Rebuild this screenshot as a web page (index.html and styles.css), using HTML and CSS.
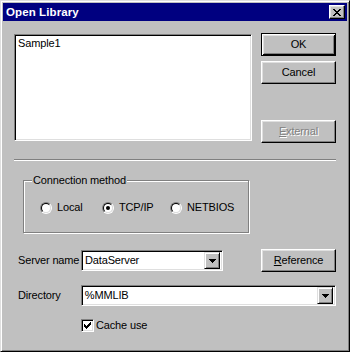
FILE: index.html
```html
<!DOCTYPE html>
<html>
<head>
<meta charset="utf-8">
<link rel="stylesheet" href="styles.css">
</head>
<body>
<div class="window">
  <div class="titlebar">
    <span class="title">Open Library</span>
    <span class="close">
      <svg width="8" height="7" viewBox="0 0 8 7" shape-rendering="crispEdges">
        <path d="M0 0h2v1h-2zM6 0h2v1h-2zM1 1h2v1h-2zM5 1h2v1h-2zM2 2h4v1h-4zM3 3h2v1h-2zM2 4h4v1h-4zM1 5h2v1h-2zM5 5h2v1h-2zM0 6h2v1h-2zM6 6h2v1h-2z" fill="#000"/>
      </svg>
    </span>
  </div>
  <div class="client">
    <div class="top">
      <div class="listbox"><div class="item">Sample1</div></div>
      <div class="btncol">
        <button class="btn default">OK</button>
        <button class="btn">Cancel</button>
        <button class="btn disabled"><u>E</u>xternal</button>
      </div>
    </div>
    <div class="sep"></div>
    <fieldset class="group">
      <legend>Connection method</legend>
      <div class="radios">
        <div class="radio"><span class="circle"><span class="inner"></span></span><span>Local</span></div>
        <div class="radio"><span class="circle"><span class="inner"><span class="dot"></span></span></span><span>TCP/IP</span></div>
        <div class="radio"><span class="circle"><span class="inner"></span></span><span>NETBIOS</span></div>
      </div>
    </fieldset>
    <div class="row server">
      <span class="lbl">Server name</span>
      <div class="combo short">
        <span class="val">DataServer</span>
        <span class="drop"><svg width="7" height="4" viewBox="0 0 7 4" shape-rendering="crispEdges"><path d="M0 0h7v1h-7zM1 1h5v1h-5zM2 2h3v1h-3zM3 3h1v1h-1z" fill="#000"/></svg></span>
      </div>
      <button class="btn ref"><u>R</u>eference</button>
    </div>
    <div class="row dir">
      <span class="lbl">Directory</span>
      <div class="combo long">
        <span class="val">%MMLIB</span>
        <span class="drop"><svg width="7" height="4" viewBox="0 0 7 4" shape-rendering="crispEdges"><path d="M0 0h7v1h-7zM1 1h5v1h-5zM2 2h3v1h-3zM3 3h1v1h-1z" fill="#000"/></svg></span>
      </div>
    </div>
    <div class="checkrow">
      <span class="checkbox">
        <svg width="7" height="7" viewBox="0 0 7 7" shape-rendering="crispEdges"><path d="M6 0h1v3h-1zM5 1h1v3h-1zM4 2h1v3h-1zM0 2h1v3h-1zM1 3h1v3h-1zM3 3h1v3h-1zM2 4h1v3h-1z" fill="#000"/></svg>
      </span>
      <span>Cache use</span>
    </div>
  </div>
</div>
</body>
</html>
```
FILE: styles.css
```css
* { box-sizing: border-box; }
html, body { margin: 0; padding: 0; background: #c0c0c0; }
body {
  font-family: "Liberation Sans", Arial, sans-serif;
  font-size: 11px;
  line-height: 13px;
  color: #000;
  letter-spacing: -0.15px;
}
.window {
  width: 350px;
  height: 352px;
  background: #c0c0c0;
  border: 1px solid;
  border-color: #dfdfdf #000 #000 #dfdfdf;
  box-shadow: inset 1px 1px #fff, inset -1px -1px #808080;
  padding: 2px;
}
.titlebar {
  height: 18px;
  background: #000080;
  display: flex;
  align-items: center;
  justify-content: space-between;
  padding: 0 2px 0 3px;
}
.title {
  color: #fff;
  font-weight: bold;
  font-size: 11.5px;
  letter-spacing: 0.1px;
}
.close {
  width: 16px;
  height: 14px;
  background: #c0c0c0;
  border: 1px solid;
  border-color: #fff #000 #000 #fff;
  box-shadow: inset -1px -1px #808080, inset 1px 1px #dfdfdf;
  display: flex;
  align-items: center;
  justify-content: center;
}
.close svg { display: block; }
.client {
  padding: 12px 11px 0 11px;
}
.top {
  display: flex;
  gap: 9px;
  height: 110px;
}
.listbox {
  width: 238px;
  height: 107px;
  margin-top: 1px;
  background: #fff;
  border: 1px solid;
  border-color: #808080 #fff #fff #808080;
  box-shadow: inset 1px 1px #000, inset -1px -1px #dfdfdf;
  padding: 2px 3px;
}
.item { line-height: 13px; }
.btncol {
  width: 75px;
  display: flex;
  flex-direction: column;
  gap: 5px;
}
.btn {
  font: inherit;
  letter-spacing: inherit;
  color: #000;
  width: 75px;
  height: 23px;
  padding: 0;
  margin: 0;
  background: #c0c0c0;
  border: 1px solid;
  border-color: #fff #000 #000 #fff;
  box-shadow: inset -1px -1px #808080, inset 1px 1px #dfdfdf;
  display: flex;
  align-items: center;
  justify-content: center;
}
.btn u { text-decoration: underline; text-underline-offset: 1px; }
.btn.default {
  border-color: #000;
  box-shadow: inset 1px 1px #fff, inset -1px -1px #000, inset 2px 2px #dfdfdf, inset -2px -2px #808080;
}
.btn.disabled {
  margin-top: auto;
  color: #808080;
  text-shadow: 1px 1px 0 #fff;
}
.sep {
  width: 322px;
  margin-top: 16px;
  border-top: 1px solid #808080;
  border-bottom: 1px solid #fff;
}
.group {
  margin: 13px 0 0 9px;
  width: 226px;
  padding: 14px 0 18px 0;
  border: 1px solid #808080;
  box-shadow: inset 1px 1px #fff, 1px 1px #fff;
  min-width: 0;
}
.group legend {
  margin-left: 8px;
  padding: 0 1px;
  line-height: 13px;
  background: #c0c0c0;
}
.radios {
  display: grid;
  grid-template-columns: 62px 68px auto;
  padding-left: 16px;
  height: 13px;
  align-items: center;
}
.radio {
  display: flex;
  align-items: center;
  gap: 5px;
}
.circle {
  width: 12px;
  height: 12px;
  border-radius: 50%;
  border: 1px solid;
  border-color: #808080 #fff #fff #808080;
  display: flex;
}
.circle .inner {
  flex: 1;
  border-radius: 50%;
  border: 1px solid;
  border-color: #000 #dfdfdf #dfdfdf #000;
  background: #fff;
  display: flex;
  align-items: center;
  justify-content: center;
}
.dot {
  width: 4px;
  height: 4px;
  border-radius: 50%;
  background: #000;
}
.row {
  display: flex;
  align-items: center;
  padding-left: 4px;
}
.row.server { margin-top: 16px; height: 23px; width: 322px; }
.row.dir { margin-top: 13px; height: 21px; }
.lbl { width: 63px; }
.combo {
  height: 21px;
  background: #fff;
  border: 1px solid;
  border-color: #808080 #fff #fff #808080;
  box-shadow: inset 1px 1px #000, inset -1px -1px #dfdfdf;
  display: flex;
  align-items: center;
  padding: 2px 2px 2px 3px;
}
.combo.short { width: 142px; }
.combo.long { width: 256px; }
.combo .val { flex: 1; }
.drop {
  width: 16px;
  height: 17px;
  background: #c0c0c0;
  border: 1px solid;
  border-color: #dfdfdf #000 #000 #dfdfdf;
  box-shadow: inset 1px 1px #fff, inset -1px -1px #808080;
  display: flex;
  align-items: center;
  justify-content: center;
}
.drop svg { display: block; }
.btn.ref { margin-left: auto; }
.checkrow {
  margin-top: 13px;
  padding-left: 67px;
  display: flex;
  align-items: center;
  gap: 2px;
  height: 13px;
}
.checkbox {
  width: 13px;
  height: 13px;
  background: #fff;
  border: 1px solid;
  border-color: #808080 #fff #fff #808080;
  box-shadow: inset 1px 1px #000, inset -1px -1px #dfdfdf;
  display: flex;
  align-items: center;
  justify-content: center;
}
.checkbox svg { display: block; }
```
